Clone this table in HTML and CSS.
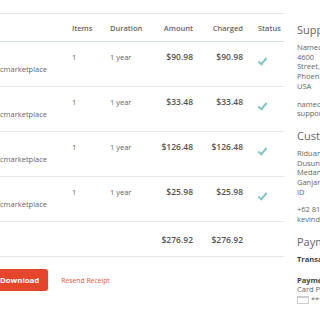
FILE: index.html
```html
<!DOCTYPE html>
<html lang="en">
<head>
  <meta charset="UTF-8">
  <title>Receipt</title>
  <link rel="stylesheet" href="styles.css">
</head>
<body>
  <div class="page">
    <div class="main">
      <div class="row head">
        <div></div>
        <div>Items</div>
        <div>Duration</div>
        <div class="num">Amount</div>
        <div class="num">Charged</div>
        <div>Status</div>
      </div>

      <div class="row item">
        <div class="desc"><span>&nbsp;</span><span>cmarketplace</span></div>
        <div>1</div>
        <div>1 year</div>
        <div class="num strong">$90.98</div>
        <div class="num strong">$90.98</div>
        <div class="status"><span class="check"></span></div>
      </div>
      <div class="row item">
        <div class="desc"><span>&nbsp;</span><span>cmarketplace</span></div>
        <div>1</div>
        <div>1 year</div>
        <div class="num strong">$33.48</div>
        <div class="num strong">$33.48</div>
        <div class="status"><span class="check"></span></div>
      </div>
      <div class="row item">
        <div class="desc"><span>&nbsp;</span><span>cmarketplace</span></div>
        <div>1</div>
        <div>1 year</div>
        <div class="num strong">$126.48</div>
        <div class="num strong">$126.48</div>
        <div class="status"><span class="check"></span></div>
      </div>
      <div class="row item">
        <div class="desc"><span>&nbsp;</span><span>cmarketplace</span></div>
        <div>1</div>
        <div>1 year</div>
        <div class="num strong">$25.98</div>
        <div class="num strong">$25.98</div>
        <div class="status"><span class="check"></span></div>
      </div>

      <div class="row total">
        <div></div>
        <div></div>
        <div></div>
        <div class="num strong">$276.92</div>
        <div class="num strong">$276.92</div>
        <div></div>
      </div>

      <div class="actions">
        <button class="btn">Download</button>
        <a class="link" href="#">Resend Receipt</a>
      </div>
    </div>

    <div class="side">
      <h3>Supplier</h3>
      <p>Namecheap, Inc.<br>4600<br>Street,<br>Phoenix,<br>USA</p>
      <p>namecheap.com<br>support@namecheap.com</p>

      <h3>Customer</h3>
      <p>Riduan<br>Dusun<br>Medan<br>Ganjar<br>ID</p>
      <p>+62 812<br>kevind@mail.com</p>

      <h3>Payment</h3>
      <p class="label">Transaction</p>
      <p class="method"><b>Payment</b><br>Card Payment<br><span class="card"></span> ****</p>
    </div>
  </div>
</body>
</html>
```

FILE: styles.css
```css
body {
  margin: 0;
  font-family: 'Open Sans', sans-serif;
  font-size: 7.5px;
  color: #666;
  background: #fff;
  overflow: hidden;
}
.page {
  display: flex;
  align-items: flex-start;
  padding-top: 13px;
}
.main {
  width: 284px;
  flex: none;
}
.row {
  display: grid;
  grid-template-columns: 72px 38px 45px 43px 50px 36px;
}
.head {
  border-top: 1px solid #e6e6e6;
  border-bottom: 1px solid #cfe1e1;
  height: 27px;
  align-items: center;
  font-weight: 600;
  color: #666;
}
.head > div:last-child {
  padding-left: 10px;
}
.item {
  height: 44px;
  border-bottom: 1px solid #e8e8e8;
  align-items: start;
}
.item > div {
  padding-top: 9px;
  line-height: 12px;
}
.desc span {
  display: block;
}
.num {
  text-align: right;
  padding-right: 5px;
}
.strong {
  font-size: 8.5px;
  font-weight: 600;
  color: #555;
}
.status {
  padding-left: 10px;
}
.check {
  display: block;
  width: 7px;
  height: 3px;
  margin-top: 7px;
  border-left: 2px solid #7fc6c2;
  border-bottom: 2px solid #7fc6c2;
  transform: rotate(-50deg);
}
.total {
  height: 34px;
  align-items: center;
  border-bottom: 1px solid #e6e6e6;
}
.actions {
  display: flex;
  align-items: center;
  margin-top: 12px;
  gap: 13px;
}
.btn {
  margin-left: -9px;
  height: 22px;
  padding: 0 9px;
  border: none;
  border-radius: 3px;
  background: #e5452b;
  color: #fff;
  font-family: 'Open Sans', sans-serif;
  font-size: 7.8px;
  font-weight: 700;
}
.link {
  color: #e5553e;
  font-size: 6.8px;
  text-decoration: none;
}
.side {
  margin-left: 13px;
  width: 23px;
  flex: none;
  overflow: hidden;
  line-height: 9.7px;
}
.side h3 {
  margin: 10px 0 0;
  font-size: 11px;
  font-weight: 400;
  color: #666;
  line-height: 14px;
  white-space: nowrap;
}
.side p {
  margin: 8px 0 0;
  white-space: nowrap;
}
.side h3 + p {
  margin-top: 6px;
}
.side .label {
  font-weight: 700;
  color: #444;
}
.side .method {
  margin-top: 11px;
}
.side .method b {
  color: #444;
}
.card {
  display: inline-block;
  width: 10px;
  height: 5px;
  border: 1px solid #ccc;
  border-top-width: 2px;
  vertical-align: middle;
}
```
